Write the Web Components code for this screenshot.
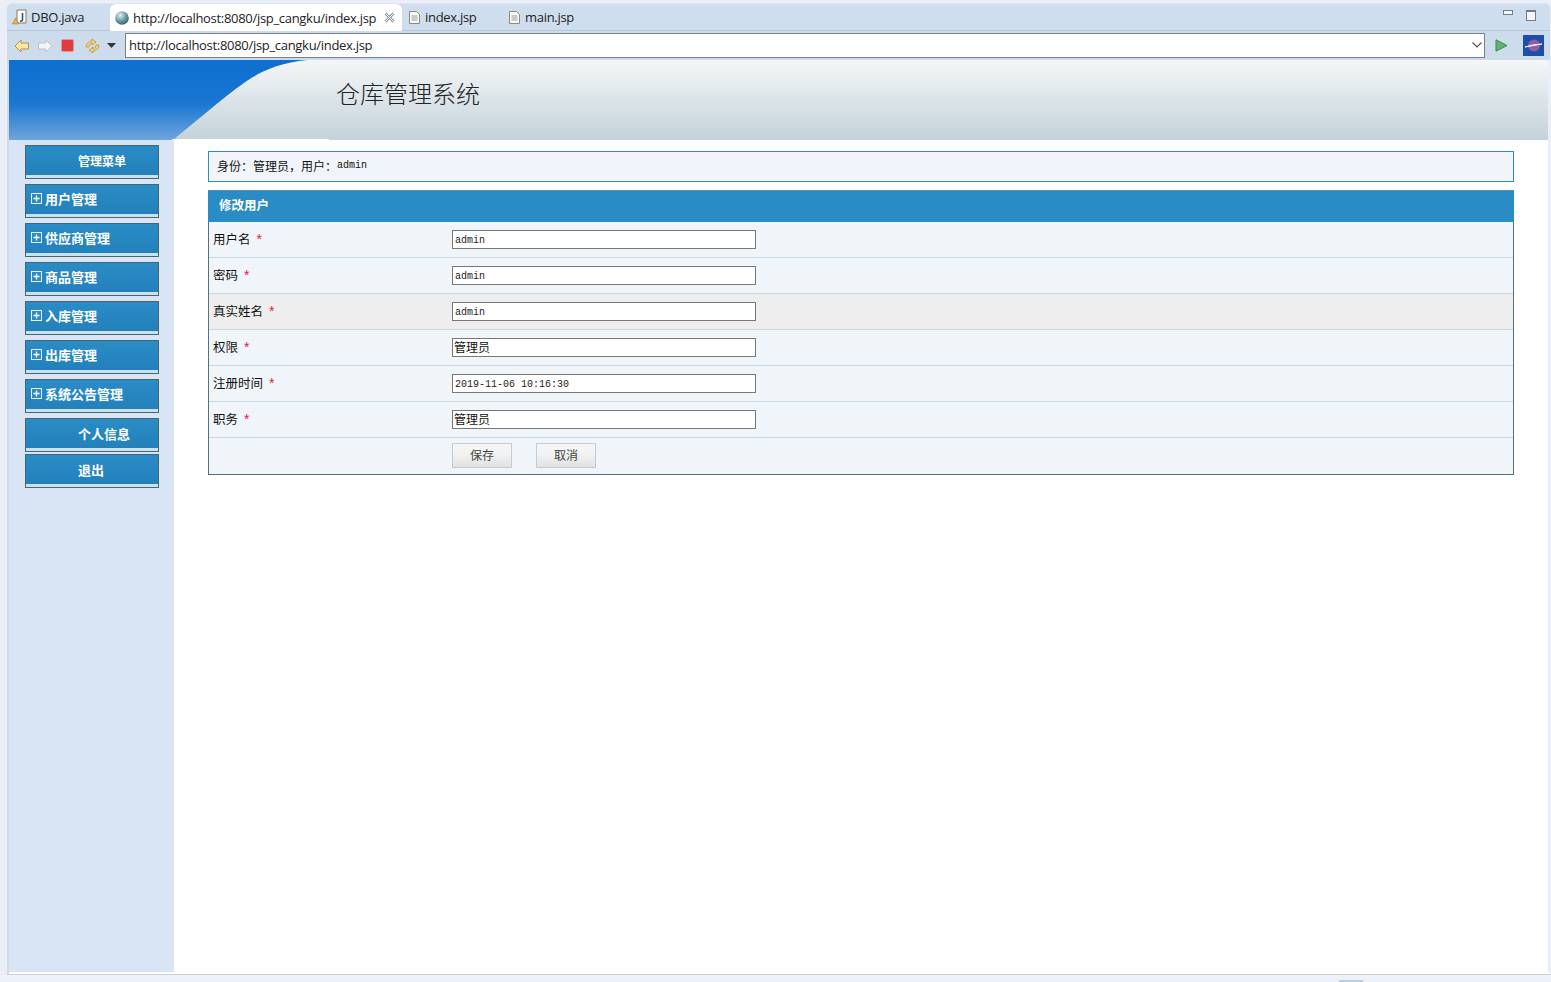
<!DOCTYPE html>
<html lang="zh">
<head>
<meta charset="utf-8">
<title>仓库管理系统</title>
<style>
  html, body { margin: 0; height: 982px; overflow: hidden; background: #e9eef7; }
  body { font-family: "Noto Sans CJK SC", "Liberation Sans", sans-serif; font-size: 13px; color: #111; }
</style>
</head>
<body>
<ide-window>
  <ide-tabs slot="tabs">
    <ide-tab kind="java" style="width:99px">DBO.java</ide-tab>
    <ide-tab kind="globe" active style="width:292px">http://localhost:8080/jsp_cangku/index.jsp</ide-tab>
    <ide-tab kind="file" style="width:100px">index.jsp</ide-tab>
    <ide-tab kind="file" style="width:100px">main.jsp</ide-tab>
  </ide-tabs>
  <browser-bar slot="bar" url="http://localhost:8080/jsp_cangku/index.jsp"></browser-bar>
  <app-banner slot="banner">仓库管理系统</app-banner>
  <side-menu slot="side">
    <side-item center small>管理菜单</side-item>
    <side-item plus>用户管理</side-item>
    <side-item plus>供应商管理</side-item>
    <side-item plus>商品管理</side-item>
    <side-item plus>入库管理</side-item>
    <side-item plus>出库管理</side-item>
    <side-item plus>系统公告管理</side-item>
    <side-item center>个人信息</side-item>
    <side-item center tight>退出</side-item>
  </side-menu>
  <main-area slot="main">
    <info-box>身份：管理员，用户：<span style="font:10px 'Liberation Mono',monospace">admin</span></info-box>
    <form-panel heading="修改用户">
      <form-row label="用户名" value="admin" mono></form-row>
      <form-row label="密码" value="admin" mono></form-row>
      <form-row label="真实姓名" value="admin" mono shade></form-row>
      <form-row label="权限" value="管理员"></form-row>
      <form-row label="注册时间" value="2019-11-06 10:16:30" mono></form-row>
      <form-row label="职务" value="管理员"></form-row>
      <form-actions></form-actions>
    </form-panel>
  </main-area>
</ide-window>

<script>
const def = (name, html) => {
  customElements.define(name, class extends HTMLElement {
    constructor() {
      super();
      this.attachShadow({mode: 'open'}).innerHTML = typeof html == 'function' ? html(this) : html;
    }
  });
};

const icons = {
  java: `<svg width="16" height="18" viewBox="0 0 16 18"><path d="M5 2h9v13H5z" fill="#fff" stroke="#8a7a55"/><path d="M10.500 5v6.500q0 2-2.500 1.500" fill="none" stroke="#2d4f8f" stroke-width="1.600"/><path d="M3.500 10l3 6h-6z" fill="#e9b54a" stroke="#a8772a" stroke-width=".6"/></svg>`,
  globe: `<svg width="16" height="16" viewBox="0 0 16 16"><defs><radialGradient id="g" cx=".38" cy=".3" r=".8"><stop offset="0" stop-color="#e4f1f2"/><stop offset=".5" stop-color="#6fa0a8"/><stop offset="1" stop-color="#2c5560"/></radialGradient></defs><circle cx="8" cy="8" r="6.800" fill="url(#g)"/></svg>`,
  file: `<svg width="13" height="15" viewBox="0 0 13 15"><path d="M1.500 1.500h7l3 3v9h-10z" fill="#fbf8ec" stroke="#8d8a78"/><path d="M3.500 6h6M3.500 8h6M3.500 10h6" stroke="#8aa0b5"/></svg>`
};

def('ide-window', `
  <style>
    :host { display: flex; flex-direction: column; height: 982px; padding: 3px 1px 0 7px; box-sizing: border-box; }
    .page { display: flex; flex: 0 0 832px; margin-right: 2px; background: #fff; }
    .end { height: 2px; background: #fff; border-left: 2px solid #d3d8e2; }
    .line { height: 2px; background: #c9cdd8; margin-right: -1px; }
    .foot { flex: 1; display: flex; justify-content: flex-end; margin-left: -7px; margin-right: -1px; background: linear-gradient(#eff3fa, #eaf0f8); }
    .foot i { width: 24px; height: 2px; margin: 5px 188px 0 0; background: #b5cfe9; }
    .left { border-left: 2px solid #d3d8e2; display: flex; flex-direction: column; flex: none; }
  </style>
  <slot name="tabs"></slot>
  <div class="left">
    <slot name="bar"></slot>
    <slot name="banner"></slot>
    <div class="page"><slot name="side"></slot><slot name="main"></slot></div>
  </div>
  <div class="end"></div>
  <div class="line"></div>
  <div class="foot"><i></i></div>
`);

def('ide-tabs', `
  <style>
    :host { display: flex; height: 28px; padding-left: 4px; background: #cfdeee; border-top: 1px solid #dfe6f1; border-bottom: 1px solid #b9c7d8; border-radius: 5px 5px 0 0; box-sizing: border-box; }
    .win { margin-left: auto; display: flex; gap: 13px; padding: 6px 14px 0 0; }
    .min { width: 8px; height: 3px; border: 1px solid #6f7c8b; background: #f4f6f9; }
    .max { width: 8px; height: 8px; border: 1px solid #6f7c8b; border-top-width: 2px; background: #f4f6f9; }
  </style>
  <slot></slot>
  <div class="win"><div class="min"></div><div class="max"></div></div>
`);

def('ide-tab', el => {
  const kind = el.getAttribute('kind');
  return `
  <style>
    :host { display: flex; align-items: center; height: 26px; box-sizing: border-box; font: 13px "Open Sans", sans-serif; letter-spacing: -.3px; color: #222; white-space: nowrap; }
    :host([kind=java]) { padding-left: 1px; gap: 3px; }
    :host([kind=file]) { padding-left: 6px; gap: 4px; }
    :host([active]) { background: #fff; border-radius: 6px 6px 0 0; height: 27px; padding-left: 4px; gap: 3px; }
    svg { flex: none; }
    .x { margin-left: 5px; }
  </style>
  ${icons[kind]}<slot></slot>
  ${el.hasAttribute('active') ? `<svg class="x" width="11" height="11" viewBox="0 0 11 11"><path d="M1.500 1.500l8 8M9.500 1.500l-8 8" stroke="#8996a5" stroke-width="2.600"/><path d="M1.500 1.500l8 8M9.500 1.500l-8 8" stroke="#fff" stroke-width="1"/></svg>` : ''}
`;
});

def('browser-bar', el => `
  <style>
    :host { display: flex; align-items: center; height: 29px; background: #cddced; box-sizing: border-box; width: 1541px; padding-left: 5px; }
    svg { flex: none; display: block; }
    .url { width: 1360px; height: 25px; box-sizing: border-box; margin-left: 9px; border: 1px solid #79808d; background: #fff; display: flex; align-items: center; justify-content: space-between; padding: 0 2px 2px 3px; font: 13px "Open Sans", sans-serif; letter-spacing: -.3px; color: #222; }
  </style>
  <svg width="16" height="14" viewBox="0 0 16 14"><path d="M1 7l6-6v3h7.500v6H7v3z" fill="#fbe6a0" stroke="#b6924a"/></svg>
  <svg style="margin-left:7px" width="16" height="14" viewBox="0 0 16 14"><path d="M15 7L9 1v3H1.500v6H9v3z" fill="#f3f5f5" stroke="#bcc4c8"/></svg>
  <svg style="margin-left:8px" width="13" height="13" viewBox="0 0 13 13"><rect x=".5" y=".5" width="12" height="12" rx="1.500" fill="#e23b3b" stroke="#c8a0a0"/></svg>
  <svg style="margin-left:10px" width="17" height="16" viewBox="0 0 17 16"><path d="M2 9q0-5 6-6V1l4 3-4 3V5Q5 6 5 9zM15 7q0 5-6 6v2l-4-3 4-3v2q3-1 3-4z" fill="#f2cf73" stroke="#b78f3c" stroke-width=".7"/></svg>
  <svg style="margin-left:6px" width="9" height="5" viewBox="0 0 9 5"><path d="M0 0h9L4.500 5z" fill="#333"/></svg>
  <div class="url"><span>${el.getAttribute('url')}</span>
    <svg width="10" height="6" viewBox="0 0 10 6"><path d="M.5.5L5 5 9.500.5" fill="none" stroke="#555" stroke-width="1.200"/></svg></div>
  <svg style="margin-left:10px" width="13" height="13" viewBox="0 0 13 13"><path d="M1 .8L12 6.500 1 12.200z" fill="#5fb56c" stroke="#3f8a55"/></svg>
  <svg style="margin-left:15px" width="21" height="21" viewBox="0 0 21 21"><rect width="21" height="21" fill="#1d4fa8"/><circle cx="11" cy="10.500" r="6" fill="#8f5ea8"/><path d="M2 12q9-3 17-3-8 1.500-17 3z" fill="#eee" stroke="#eee"/></svg>
`);

def('app-banner', `
  <style>
    :host { display: block; position: relative; width: 1539px; height: 80px; box-sizing: border-box; padding: 16px 0 0 327px; background: linear-gradient(#f4f6f7, #c4d2da); font-size: 24px; line-height: 33px; font-weight: 300; color: #222; }
    svg { position: absolute; left: 0; top: 0; }
    span { position: relative; }
    .edge { position: absolute; left: 163px; top: 79px; width: 157px; height: 1px; background: #fff; }
  </style>
  <svg width="300" height="80" viewBox="0 0 300 80"><defs><linearGradient id="b" x1="0" y1="0" x2="0" y2="1"><stop offset="0" stop-color="#0d6fd0"/><stop offset=".55" stop-color="#1a77d2"/><stop offset="1" stop-color="#6fa5dc"/></linearGradient></defs>
    <path d="M0 0H298C275 2 255 10 244 17C228 27 215 38 204 47C190 59 178 68 164 80H0z" fill="url(#b)"/></svg>
  <span><slot></slot></span>
  <div class="edge"></div>
`);

def('side-menu', `
  <style>
    :host { display: flex; flex-direction: column; gap: 5px; flex: none; width: 165px; box-sizing: border-box; padding: 5px 15px 0 16px; background: #d9e5f4; }
  </style>
  <slot></slot>
`);

def('side-item', el => `
  <style>
    :host { display: flex; align-items: center; height: 34px; box-sizing: border-box; border: 1px solid #47666f; background: linear-gradient(#c9e3ee,#c9e3ee) bottom/100% 3px no-repeat, linear-gradient(#2a8cc6, #227fba); color: #fff; font-size: 13px; font-weight: 700; padding: 0 0 5px 5px; gap: 3px; white-space: nowrap; }
    :host([center]) { padding: 0 0 3px 52px; }
    :host([small]), :host([tight]) { padding-bottom: 4px; }
    :host([small]) { font-size: 12px; }
    :host([tight]) { margin-top: -3px; }
    svg { flex: none; }
  </style>
  ${el.hasAttribute('plus') ? `<svg width="11" height="11" viewBox="0 0 11 11"><rect x=".5" y=".5" width="10" height="10" fill="#2a8cc6" stroke="#e8f2f8"/><path d="M2.500 5.500h6M5.500 2.500v6" stroke="#fff" stroke-width="1.300"/></svg>` : ''}
  <slot></slot>
`);

def('main-area', `
  <style>
    :host { display: flex; flex-direction: column; gap: 8px; flex: 1; min-width: 0; padding: 11px 34px 0 34px; }
  </style>
  <slot></slot>
`);

def('info-box', `
  <style>
    :host { display: flex; align-items: center; height: 31px; box-sizing: border-box; padding: 0 0 3px 8px; border: 1px solid #2c90b8; background: #f1f5f9; font-size: 12px; white-space: nowrap; }
  </style>
  <slot></slot>
`);

def('form-panel', el => `
  <style>
    :host { display: block; border: 1px solid #56707c; border-top: 0; background: #f0f5f9; }
    .head { height: 32px; box-sizing: border-box; padding: 0 0 5px 11px; display: flex; align-items: center; margin: 0 -1px; background: #298cc4; border-top: 1px solid #5b8ba8; color: #fff; font-size: 12.500px; font-weight: 700; }
  </style>
  <div class="head">${el.getAttribute('heading')}</div>
  <slot></slot>
`);

def('form-row', el => {
  const mono = el.hasAttribute('mono');
  return `
  <style>
    :host { display: flex; align-items: center; height: 36px; box-sizing: border-box; border-bottom: 1px solid #c5d8e6; padding: 0 0 1px 4px; }
    :host([shade]) { background: #eee; }
    .label { width: 239px; flex: none; font-size: 12.500px; white-space: nowrap; padding-bottom: 2px; }
    .star { color: #e0204a; margin-left: 6px; font: 14px "Liberation Sans", sans-serif; }
    .box { width: 304px; height: 19px; box-sizing: border-box; border: 1px solid #777; background: #fff; display: flex; align-items: center; padding: ${mono ? '2px 0 0 2px' : '0 0 2px 1px'}; white-space: nowrap; overflow: hidden;
      font: ${mono ? "10px 'Liberation Mono', monospace" : "12px 'Noto Sans CJK SC', sans-serif"}; color: ${mono ? '#222' : '#111'}; }
  </style>
  <div class="label">${el.getAttribute('label')}<span class="star">*</span></div>
  <div class="box">${el.getAttribute('value')}</div>`;
});

def('form-actions', `
  <style>
    :host { display: flex; align-items: center; gap: 24px; height: 36px; padding: 0 0 2px 243px; box-sizing: border-box; }
    div { width: 60px; height: 25px; box-sizing: border-box; border: 1px solid #c6ccd1; background: linear-gradient(#f6f6f6, #f2f2f2 45%, #dfe1e3); display: flex; align-items: center; justify-content: center; padding-bottom: 2px; font-size: 12px; color: #444; }
  </style>
  <div>保存</div><div>取消</div>
`);
</script>
</body>
</html>
